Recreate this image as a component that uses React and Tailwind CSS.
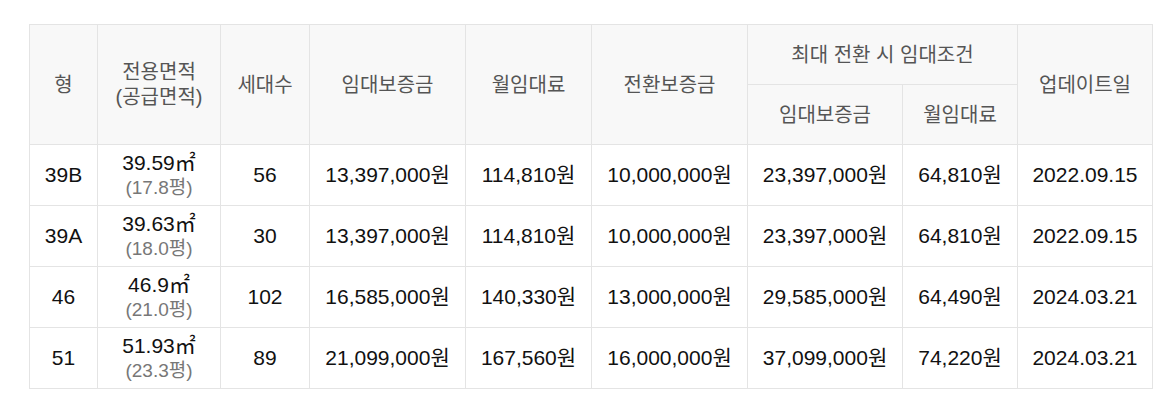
const rows = [
    { type: '39B', area: '39.59㎡', supply: '(17.8평)', units: '56', deposit: '13,397,000원', rent: '114,810원', conv: '10,000,000원', maxDeposit: '23,397,000원', maxRent: '64,810원', date: '2022.09.15' },
    { type: '39A', area: '39.63㎡', supply: '(18.0평)', units: '30', deposit: '13,397,000원', rent: '114,810원', conv: '10,000,000원', maxDeposit: '23,397,000원', maxRent: '64,810원', date: '2022.09.15' },
    { type: '46', area: '46.9㎡', supply: '(21.0평)', units: '102', deposit: '16,585,000원', rent: '140,330원', conv: '13,000,000원', maxDeposit: '29,585,000원', maxRent: '64,490원', date: '2024.03.21' },
    { type: '51', area: '51.93㎡', supply: '(23.3평)', units: '89', deposit: '21,099,000원', rent: '167,560원', conv: '16,000,000원', maxDeposit: '37,099,000원', maxRent: '74,220원', date: '2024.03.21' },
];

const th = 'border border-[#e4e4e4] bg-[#f8f8f8] font-normal text-[20px] text-[#555] text-center align-middle';
const td = 'border border-[#e4e4e4] text-[21px] text-[#111] text-center align-middle';

export default function App() {
    return (
        <div className="w-[1174px] h-[408px] bg-white pt-[24px] pl-[29px] font-['Liberation_Sans','Noto_Sans_CJK_KR',sans-serif]">
            <table className="border-collapse table-fixed w-[1123px] border-t border-t-[#d4d4d4]">
                <colgroup>
                    <col className="w-[68px]" />
                    <col className="w-[123px]" />
                    <col className="w-[89px]" />
                    <col className="w-[156px]" />
                    <col className="w-[126px]" />
                    <col className="w-[156px]" />
                    <col className="w-[155px]" />
                    <col className="w-[115px]" />
                    <col className="w-[135px]" />
                </colgroup>
                <thead>
                    <tr className="h-[60px]">
                        <th rowSpan={2} className={th}>형</th>
                        <th rowSpan={2} className={`${th} leading-[25px]`}>전용면적<br />(공급면적)</th>
                        <th rowSpan={2} className={th}>세대수</th>
                        <th rowSpan={2} className={th}>임대보증금</th>
                        <th rowSpan={2} className={th}>월임대료</th>
                        <th rowSpan={2} className={th}>전환보증금</th>
                        <th colSpan={2} className={th}>최대 전환 시 임대조건</th>
                        <th rowSpan={2} className={th}>업데이트일</th>
                    </tr>
                    <tr className="h-[60px]">
                        <th className={th}>임대보증금</th>
                        <th className={th}>월임대료</th>
                    </tr>
                </thead>
                <tbody>
                    {rows.map((r, i) => (
                        <tr key={i} className="h-[61px]">
                            <td className={td}>{r.type}</td>
                            <td className={`${td} leading-[25px]`}>
                                <div>{r.area}</div>
                                <div className="text-[19px] text-[#777]">{r.supply}</div>
                            </td>
                            <td className={td}>{r.units}</td>
                            <td className={td}>{r.deposit}</td>
                            <td className={td}>{r.rent}</td>
                            <td className={td}>{r.conv}</td>
                            <td className={td}>{r.maxDeposit}</td>
                            <td className={td}>{r.maxRent}</td>
                            <td className={td}>{r.date}</td>
                        </tr>
                    ))}
                </tbody>
            </table>
        </div>
    );
}
